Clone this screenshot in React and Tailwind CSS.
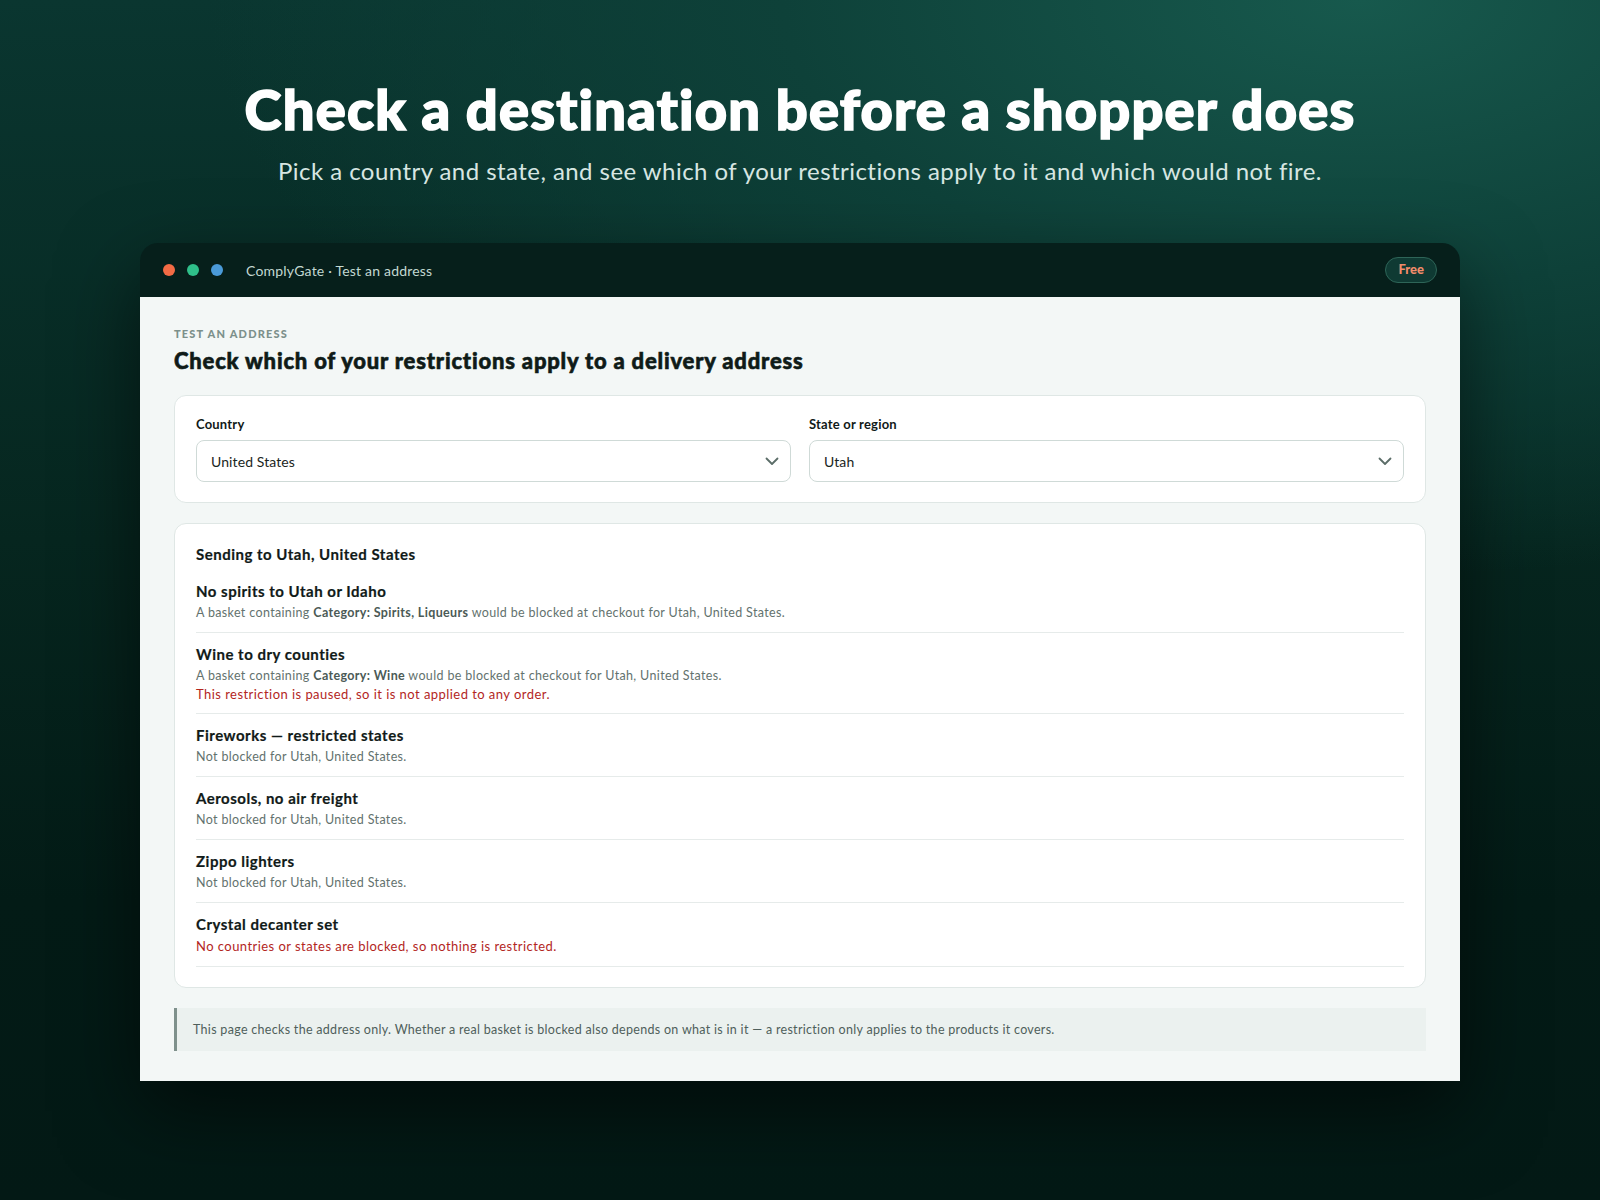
import React from "react";

const FONT = { fontFamily: "Lato, 'Noto Sans', sans-serif" };

function Chevron() {
  return (
    <svg width="16" height="16" viewBox="0 0 16 16" fill="none" className="shrink-0">
      <path d="M2.5 5.5L8 11l5.5-5.5" stroke="#5b6d68" strokeWidth="1.8" strokeLinecap="round" strokeLinejoin="round" />
    </svg>
  );
}

function SelectBox({ label, value }) {
  return (
    <div className="flex flex-col">
      <div className="text-[13px] leading-[16px] font-bold text-[#111a18] tracking-[0.2px]">{label}</div>
      <div className="mt-2 h-[42px] rounded-[8px] border border-[#cfdad7] bg-white flex items-center justify-between pl-[14px] pr-[10px]">
        <span className="text-[14px] text-[#1a2522] tracking-[0.1px]">{value}</span>
        <Chevron />
      </div>
    </div>
  );
}

function Item({ title, children }) {
  return (
    <div className="pt-[11px] pb-[10px] border-b border-[#e6ebea]">
      <div className="text-[15px] leading-[20px] font-bold text-[#111a18] tracking-[0.5px] [-webkit-text-stroke:0.2px_#111a18]">{title}</div>
      <div className="mt-[3px] text-[12.5px] leading-[18px] text-[#63726e] tracking-[0.35px]">{children}</div>
    </div>
  );
}

export default function App() {
  return (
    <div
      style={FONT}
      className="min-h-[1200px] w-full flex flex-col items-center bg-[radial-gradient(ellipse_90%_60%_at_85%_0%,#17594d_0%,#0e4139_40%,rgba(6,37,31,0)_80%),linear-gradient(180deg,#0a3630_0%,#06261f_45%,#031b16_75%,#031915_100%)]"
    >
      <h1 className="pt-[77px] text-[56px] leading-[64px] font-black text-white tracking-[1.2px] [-webkit-text-stroke:1.6px_white]">
        Check a destination before a shopper does
      </h1>
      <p className="mt-[14px] text-[24px] leading-[32px] text-[#d7e6e2] tracking-[0.45px]">
        Pick a country and state, and see which of your restrictions apply to it and which would not fire.
      </p>

      <div className="mt-[56px] w-[1320px] rounded-t-[18px] overflow-hidden shadow-[0_30px_80px_rgba(0,0,0,0.55)]">
        <div className="h-[54px] bg-[#061f1b] flex items-center px-[23px]">
          <div className="flex items-center gap-3">
            <span className="w-3 h-3 rounded-full bg-[#f26b45]" />
            <span className="w-3 h-3 rounded-full bg-[#2fbf8a]" />
            <span className="w-3 h-3 rounded-full bg-[#4a9ad8]" />
          </div>
          <div className="ml-[23px] text-[14px] text-[#c2d8d2] tracking-[0.2px]">ComplyGate · Test an address</div>
          <div className="ml-auto h-[26px] px-3 rounded-full border border-[#2e6558] bg-[#0f3a33] flex items-center text-[13px] font-black text-[#f28c6b]">
            Free
          </div>
        </div>

        <div className="bg-[#f3f7f6] px-[34px] pt-[30px] pb-[30px]">
          <div className="text-[11px] leading-[14px] font-black tracking-[1.2px] text-[#7c908b]">TEST AN ADDRESS</div>
          <h2 className="mt-[6px] text-[22px] leading-[28px] font-black text-[#0f1b18] tracking-[0.8px] [-webkit-text-stroke:0.6px_#0f1b18]">
            Check which of your restrictions apply to a delivery address
          </h2>

          <div className="mt-5 flex flex-col gap-5">
            <div className="rounded-[12px] border border-[#dfe7e5] bg-white px-[21px] pt-[20px] pb-[20px] grid grid-cols-2 gap-[18px]">
              <SelectBox label="Country" value="United States" />
              <SelectBox label="State or region" value="Utah" />
            </div>

            <div className="rounded-[12px] border border-[#dfe7e5] bg-white px-[21px] pt-5 pb-5">
              <div className="text-[15px] leading-[20px] font-bold text-[#111a18] mb-[6px] tracking-[0.5px] [-webkit-text-stroke:0.2px_#111a18]">Sending to Utah, United States</div>
              <Item title="No spirits to Utah or Idaho">
                A basket containing <b className="font-bold text-[#4b5a56]">Category: Spirits, Liqueurs</b> would be blocked at checkout for Utah, United States.
              </Item>
              <Item title="Wine to dry counties">
                A basket containing <b className="font-bold text-[#4b5a56]">Category: Wine</b> would be blocked at checkout for Utah, United States.
                <div className="text-[#b3261e] text-[13px] tracking-[0.45px]">This restriction is paused, so it is not applied to any order.</div>
              </Item>
              <Item title="Fireworks — restricted states">Not blocked for Utah, United States.</Item>
              <Item title="Aerosols, no air freight">Not blocked for Utah, United States.</Item>
              <Item title="Zippo lighters">Not blocked for Utah, United States.</Item>
              <Item title="Crystal decanter set">
                <span className="text-[#b3261e] text-[13px] tracking-[0.45px]">No countries or states are blocked, so nothing is restricted.</span>
              </Item>
            </div>

            <div className="border-l-[3px] border-[#7f918c] bg-[#ebf1ef] pl-4 pr-4 py-3 text-[12.5px] leading-[19px] text-[#4f5f5b] tracking-[0.3px]">
              This page checks the address only. Whether a real basket is blocked also depends on what is in it — a restriction only applies to the products it covers.
            </div>
          </div>
        </div>
      </div>
    </div>
  );
}
